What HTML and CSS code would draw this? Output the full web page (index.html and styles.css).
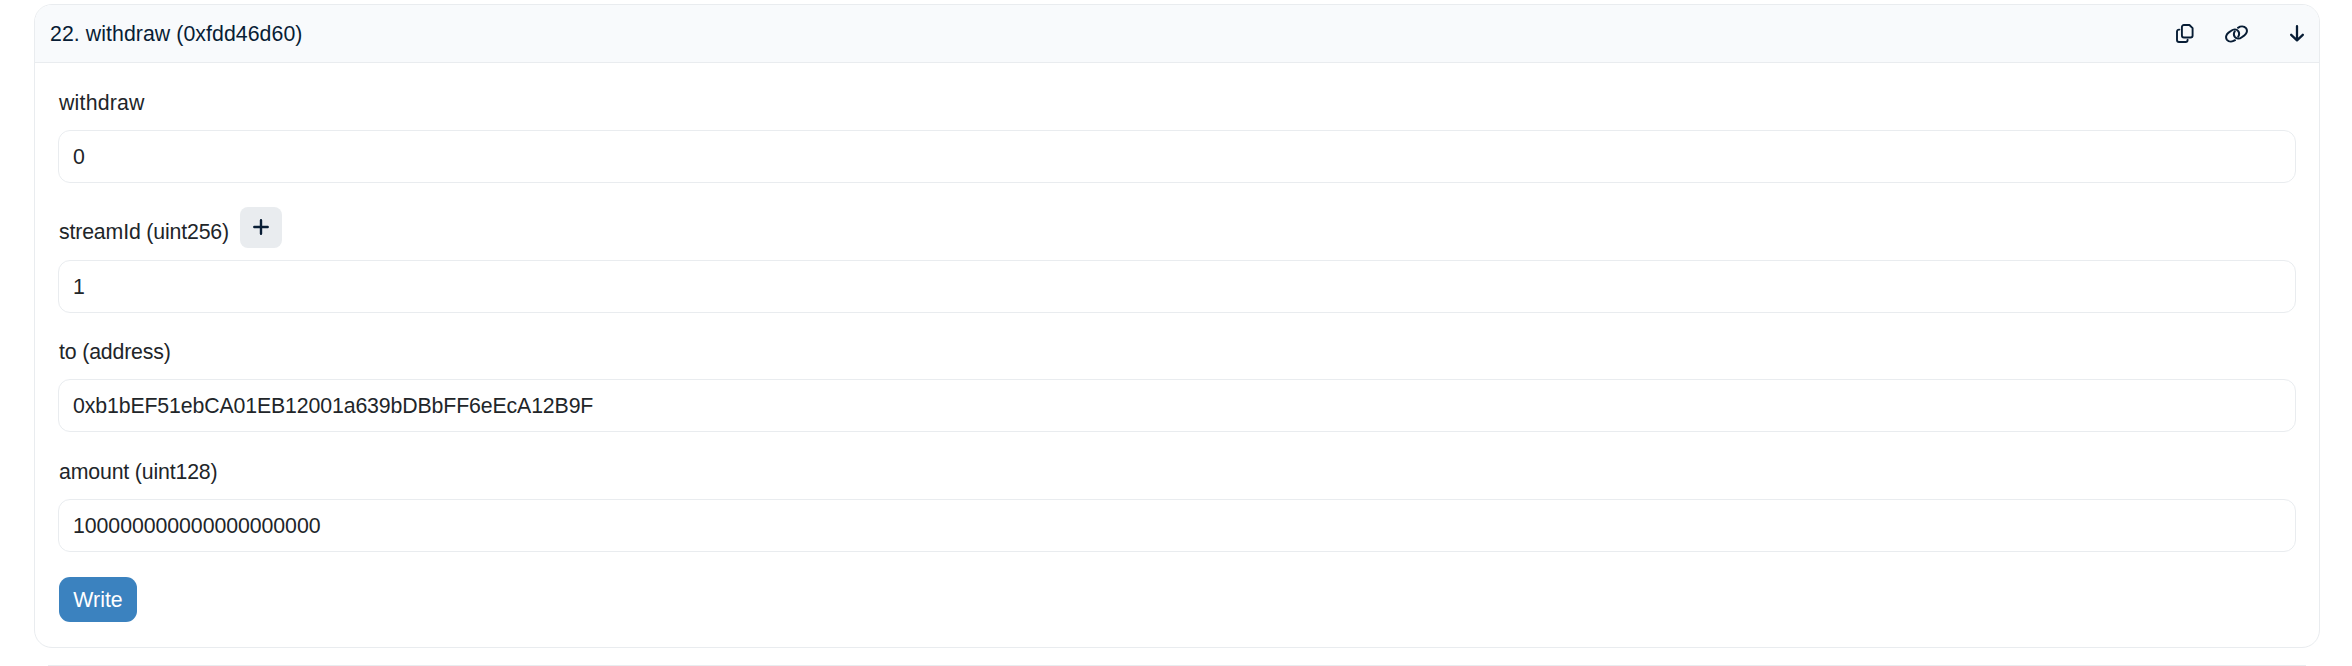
FILE: index.html
```html
<!DOCTYPE html>
<html lang="en">
<head>
    <meta charset="UTF-8">
    <meta name="viewport" content="width=device-width, initial-scale=1.0">
    <title>Write Contract</title>
    <link rel="stylesheet" href="styles.css">
</head>
<body>

    <div class="card">
        <div class="card-header">
            <span class="card-title">22. withdraw (0xfdd46d60)</span>
            <div class="card-actions">
                <svg class="icon icon-copy" viewBox="0 0 18 19" fill="none" stroke="currentColor" stroke-width="1.9" stroke-linecap="round" stroke-linejoin="round">
                    <path d="M7.9 1h5.5L16.6 4.2v7.3a2 2 0 0 1-2 2H7.9a2 2 0 0 1-2-2V3a2 2 0 0 1 2-2z"/>
                    <path d="M3.4 5.6H3a2 2 0 0 0-2 2V16a2 2 0 0 0 2 2h6.6a2 2 0 0 0 2-2v-.2"/>
                </svg>
                <svg class="icon icon-link" viewBox="0 0 23 18" fill="none" stroke="currentColor" stroke-width="2" stroke-linecap="round">
                    <path d="M10 15.2C7.5 16.9 3.9 17 2 14.8C.2 12.6 1.2 9.4 3.6 7.6L6.2 5.8C8.6 4 11.5 4 13.2 6.2C14.5 8 14.3 10 13.2 11.7"/>
                    <path d="M13 2.8C15.5 1.1 19.1 1 21 3.2C22.8 5.4 21.8 8.6 19.4 10.4L16.8 12.2C14.4 14 11.5 14 9.8 11.8C8.5 10 8.7 8 9.8 6.3"/>
                </svg>
                <svg class="icon icon-arrow" viewBox="0 0 14 17" fill="none" stroke="currentColor" stroke-width="2.3" stroke-linecap="round" stroke-linejoin="round">
                    <path d="M7 1.2v14M1.2 9.8L7 15.4l5.8-5.6"/>
                </svg>
            </div>
        </div>
        <div class="card-body">
            <div class="form-group">
                <label class="label-name" for="withdraw">withdraw</label>
                <input type="text" id="withdraw" value="0">
            </div>
            <div class="form-group form-group-stream">
                <div class="label-row">
                    <label for="stream-id">streamId (uint256)</label>
                    <button class="btn-add" type="button" aria-label="Add zeroes">
                        <svg class="icon icon-plus" viewBox="0 0 16 16" fill="none" stroke="currentColor" stroke-width="2.4" stroke-linecap="round">
                            <path d="M8 1.3v13.4M1.3 8h13.4"/>
                        </svg>
                    </button>
                </div>
                <input type="text" id="stream-id" value="1">
            </div>
            <div class="form-group">
                <label for="to">to (address)</label>
                <input class="input-address" type="text" id="to" value="0xb1bEF51ebCA01EB12001a639bDBbFF6eEcA12B9F">
            </div>
            <div class="form-group">
                <label for="amount">amount (uint128)</label>
                <input type="text" id="amount" value="100000000000000000000">
            </div>
            <button class="btn-write" type="button">Write</button>
        </div>
    </div>

    <div class="card-next"></div>

</body>
</html>
```
FILE: styles.css
```css
* {
    box-sizing: border-box;
}

body {
    margin: 0;
    padding: 4px 32px 0 34px;
    height: 666px;
    background-color: #fff;
    color: #212529;
    font-family: "Liberation Sans", Arial, sans-serif;
    font-size: 21.3px;
    line-height: 32px;
}

.card {
    height: 644px;
    border: 1px solid #e9ecef;
    border-radius: 18px;
    overflow: hidden;
}

.card-next {
    height: 1px;
    margin: 17px 14px 0;
    background-color: #e9ecef;
}

.card-header {
    display: flex;
    align-items: center;
    justify-content: space-between;
    height: 58px;
    padding: 0 15px 0 15px;
    background-color: #f8fafc;
    border-bottom: 1px solid #e9ecef;
    color: #081d35;
}

.card-title {
    letter-spacing: 0.06px;
}

.card-actions {
    display: flex;
    align-items: center;
}

.icon {
    display: block;
}

.icon-copy {
    width: 18px;
    height: 19px;
    margin-right: 31px;
}

.icon-link {
    width: 23px;
    height: 18px;
    margin-right: 42px;
}

.icon-arrow {
    width: 14px;
    height: 17px;
}

.card-body {
    padding: 24px 23px;
}

.form-group {
    margin-bottom: 24px;
}

    .form-group label {
        display: block;
        height: 43px;
        padding-left: 1px;
        letter-spacing: -0.16px;
    }

    .form-group .label-name {
        letter-spacing: 0.2px;
    }

    .form-group input {
        display: block;
        width: 100%;
        height: 53px;
        padding: 1px 14px 0;
        border: 1px solid #e9ecef;
        border-radius: 12px;
        background-color: #fff;
        color: #212529;
        font: inherit;
        letter-spacing: -0.06px;
    }

    .form-group .input-address {
        letter-spacing: -0.13px;
    }

.form-group-stream {
    margin-bottom: 23px;
}

.label-row {
    display: flex;
    align-items: flex-end;
    height: 53px;
}

    .label-row label {
        height: 44px;
    }

.btn-add {
    display: flex;
    align-items: center;
    justify-content: center;
    width: 42px;
    height: 41px;
    margin: 0 0 12px 11px;
    padding: 0 0 1px;
    border: none;
    border-radius: 8px;
    background-color: #e9ecef;
    color: #081d35;
}

.icon-plus {
    width: 16px;
    height: 16px;
}

.btn-write {
    display: block;
    width: 78px;
    height: 45px;
    margin: 25px 0 0 1px;
    padding: 0;
    border: none;
    border-radius: 11px;
    background-color: #3b82bf;
    color: #fff;
    font: inherit;
}
```
